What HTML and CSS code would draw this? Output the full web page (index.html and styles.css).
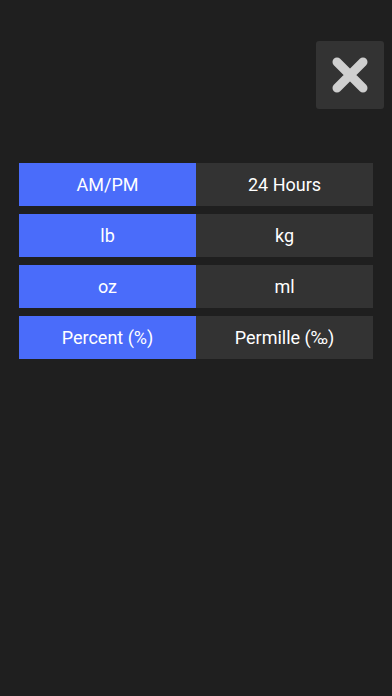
FILE: index.html
```html
<!DOCTYPE html>
<html lang="en">
<head>
  <meta charset="UTF-8" />
  <meta name="viewport" content="width=device-width, initial-scale=1.0"/>
  <title>Settings</title>
  <link rel="stylesheet" href="styles.css">
</head>
<body>
  <div class="top-bar">
    <button class="close-btn" aria-label="Close">
      <svg width="38" height="38" viewBox="0 0 38 38">
        <path d="M6 6 L32 32 M32 6 L6 32" stroke="#cfcfcf" stroke-width="9" stroke-linecap="round"/>
      </svg>
    </button>
  </div>

  <!-- unit toggles -->
  <div class="options">
    <div class="toggle">
      <div class="opt active">AM/PM</div>
      <div class="opt">24 Hours</div>
    </div>
    <div class="toggle">
      <div class="opt active">lb</div>
      <div class="opt">kg</div>
    </div>
    <div class="toggle">
      <div class="opt active">oz</div>
      <div class="opt">ml</div>
    </div>
    <div class="toggle">
      <div class="opt active">Percent (%)</div>
      <div class="opt">Permille (‰)</div>
    </div>
  </div>
</body>
</html>
```

FILE: styles.css
```css
body {
  font-family: Roboto, 'Liberation Sans', sans-serif;
  background-color: #1f1f1f;
  margin: 0;
  padding: 0;
  width: 392px;
  height: 696px;
  overflow: hidden;
}

.top-bar {
  display: flex;
  justify-content: flex-end;
  padding: 41px 8px 0 0;
}

.close-btn {
  width: 68px;
  height: 68px;
  background: #333333;
  border: none;
  border-radius: 3px;
  padding: 0;
  display: flex;
  align-items: center;
  justify-content: center;
}

.options {
  display: flex;
  flex-direction: column;
  gap: 8px;
  margin: 54px 19px 0 19px;
}

.toggle {
  display: flex;
  height: 43px;
}

.opt {
  flex: 1;
  display: flex;
  align-items: center;
  justify-content: center;
  background: #333333;
  color: #ffffff;
  font-size: 18px;
}

.opt.active {
  background: #4a6cfa;
}
```
